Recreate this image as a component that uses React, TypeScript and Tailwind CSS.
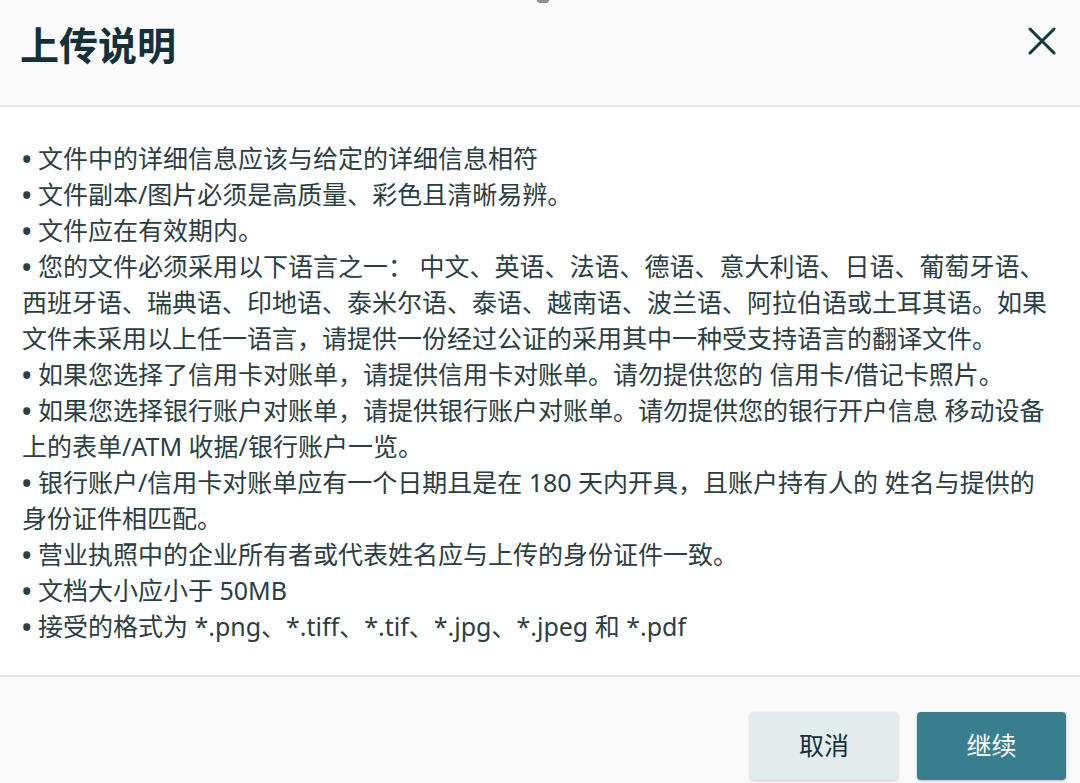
import React from "react";

const items: React.ReactNode[] = [
  "文件中的详细信息应该与给定的详细信息相符",
  "文件副本/图片必须是高质量、彩色且清晰易辨。",
  "文件应在有效期内。",
  "您的文件必须采用以下语言之一： 中文、英语、法语、德语、意大利语、日语、葡萄牙语、西班牙语、瑞典语、印地语、泰米尔语、泰语、越南语、波兰语、阿拉伯语或土耳其语。如果文件未采用以上任一语言，请提供一份经过公证的采用其中一种受支持语言的翻译文件。",
  "如果您选择了信用卡对账单，请提供信用卡对账单。请勿提供您的 信用卡/借记卡照片。",
  "如果您选择银行账户对账单，请提供银行账户对账单。请勿提供您的银行开户信息 移动设备上的表单/ATM 收据/银行账户一览。",
  "银行账户/信用卡对账单应有一个日期且是在 180 天内开具，且账户持有人的 姓名与提供的身份证件相匹配。",
  "营业执照中的企业所有者或代表姓名应与上传的身份证件一致。",
  "文档大小应小于 50MB",
  "接受的格式为 *.png、*.tiff、*.tif、*.jpg、*.jpeg 和 *.pdf",
];

export default function App() {
  return (
    <div
      className="relative flex h-[783px] w-[1080px] flex-col overflow-hidden bg-white"
      style={{ fontFamily: '"Noto Sans", "Noto Sans CJK SC", sans-serif' }}
    >
      <div className="absolute left-[537px] top-0 h-[3px] w-[12px] rounded-b bg-[#8a8f90]" />
      <div className="flex h-[107px] shrink-0 items-start justify-between border-b-[2px] border-[#e0e5e5] bg-[#fafafa] pl-[20px] pr-[24px] pt-[19px]">
        <h1 className="text-[39px] font-bold leading-[52px] text-[#12313a]">上传说明</h1>
        <button className="mt-[8px] flex h-[28px] w-[28px] items-center justify-center">
          <svg width="28" height="28" viewBox="0 0 28 28" fill="none">
            <path d="M2 2 L26 26 M26 2 L2 26" stroke="#143a40" strokeWidth="3" strokeLinecap="round" />
          </svg>
        </button>
      </div>
      <div className="shrink-0 px-[22px] pb-[31px] pt-[33px] text-[25px] leading-[36px] text-[#2a3e44]">
        {items.map((t, i) => (
          <p key={i}>
            <span className="font-bold">•</span> {t}
          </p>
        ))}
      </div>
      <div className="flex flex-1 items-start justify-end gap-[19px] border-t-[2px] border-[#e0e5e5] bg-[#fafafa] pr-[14px] pt-[35px]">
        <button className="h-[68px] w-[148px] rounded-[4px] bg-[#e4ebed] text-[25px] text-[#12313a] shadow-[0_1px_3px_rgba(0,0,0,0.2)]">
          取消
        </button>
        <button className="h-[68px] w-[149px] rounded-[4px] bg-[#387e8f] text-[25px] text-white shadow-[0_1px_3px_rgba(0,0,0,0.25)]">
          继续
        </button>
      </div>
    </div>
  );
}
